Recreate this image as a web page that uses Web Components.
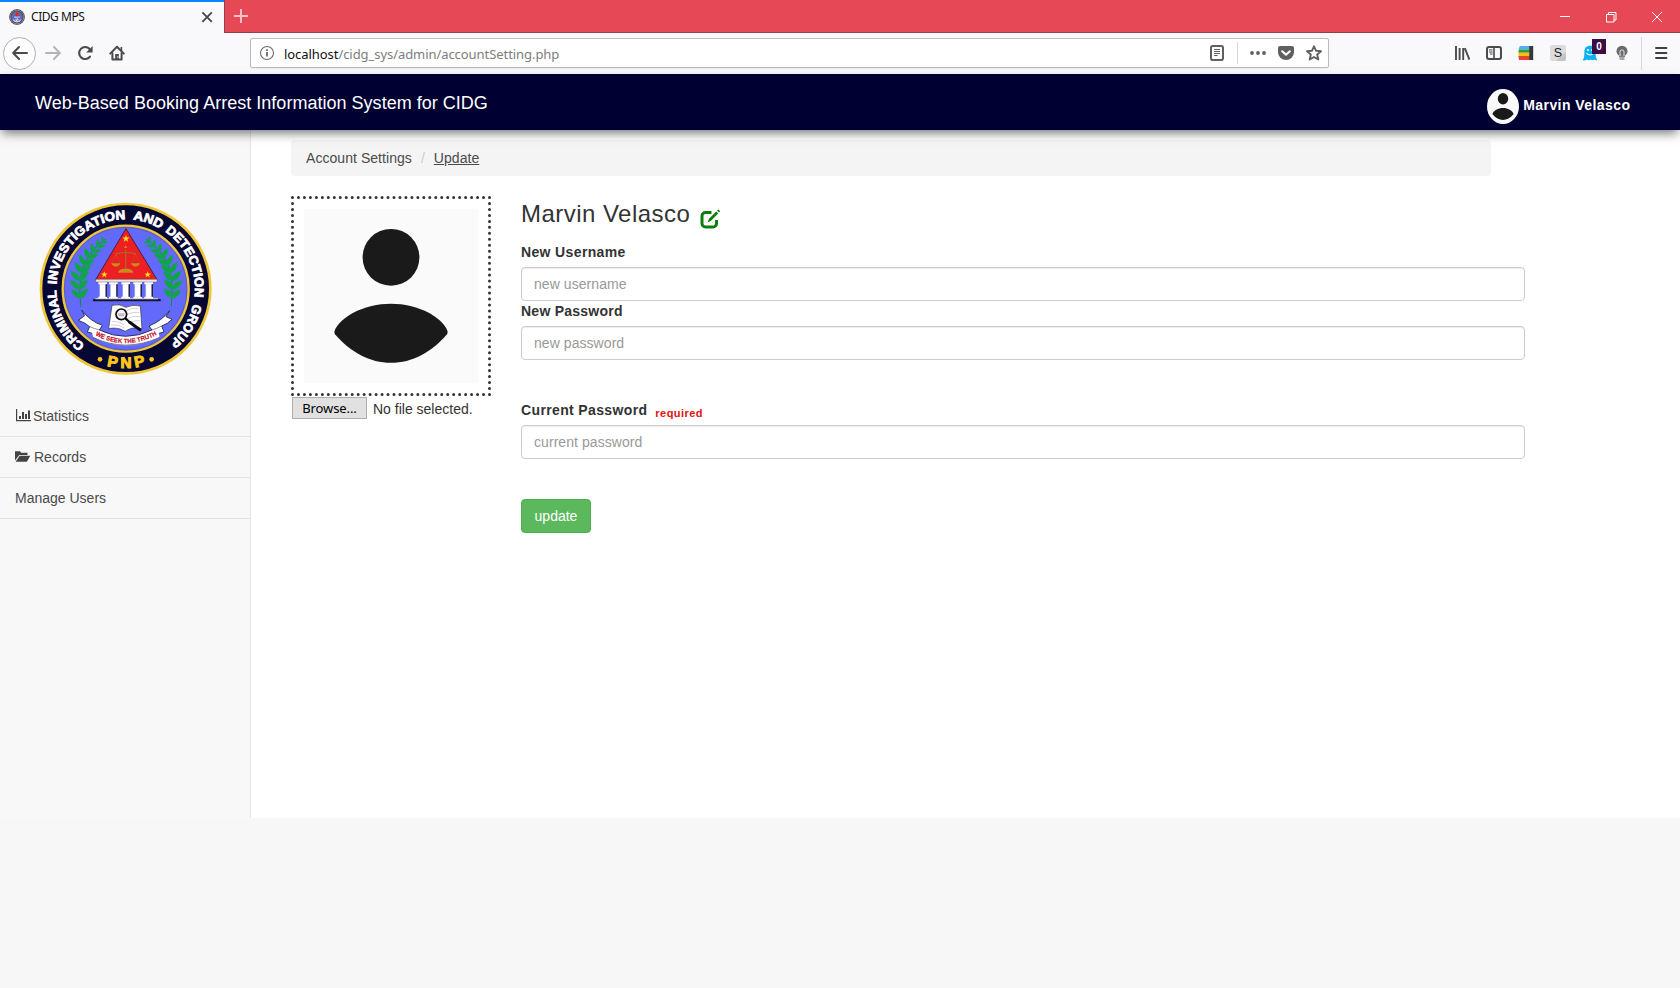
<!DOCTYPE html>
<html lang="en">
<head>
<meta charset="utf-8">
<title>CIDG MPS</title>
<style>
html,body{margin:0;height:100%;background:#f7f7f7;overflow:hidden}
body{font-family:"Liberation Sans",Arial,sans-serif;font-size:14px;line-height:20px;color:#333}
</style>
</head>
<body>
<app-window></app-window>
<script>
const define = (name, html) => customElements.define(name, class extends HTMLElement {
  constructor() {
    super();
    const t = document.createElement('template');
    t.innerHTML = typeof html === 'function' ? html(this) : html;
    this.attachShadow({mode: 'open'}).append(t.content.cloneNode(true));
  }
});

/* ---------- icons ---------- */
const G = 'fill="none" stroke="#4a4a4d" stroke-width="2" stroke-linecap="round" stroke-linejoin="round"';
const ICONS = {
  back: `<path ${G} d="M15 8H1.5M7 2L1.2 8L7 14"/>`,
  forward: `<path ${G} style="stroke:#b4b4b6" d="M1 8h13.5M9 2l5.8 6L9 14"/>`,
  reload: `<path fill="none" stroke="#4a4a4d" stroke-width="2.1" stroke-linecap="round" d="M13 11.6A6 6 0 1 1 12.6 4"/><path fill="#4a4a4d" d="M15.6 1v6.4H9.2z"/>`,
  home: `<path ${G} d="M1.2 8.6L8 1.8l6.8 6.8"/><path ${G} d="M3.4 8v6.6h9.2V8"/><path fill="#4a4a4d" d="M6.2 9h3.6v6H6.2zM11.6 2h1.6v4h-1.6z"/><circle cx="8.8" cy="12" r=".7" fill="#fff"/>`,
  info: `<circle cx="8" cy="8" r="6.5" fill="none" stroke="#6b6b6e" stroke-width="1.1"/><path stroke="#6b6b6e" stroke-width="1.8" d="M8 7v4.6M8 4.2V6"/>`,
  reader: `<rect x="2" y="1" width="12" height="14" rx="1.8" fill="none" stroke="#606063" stroke-width="2"/><path stroke="#606063" stroke-width="1" d="M5 4.5h6M5 6.5h6M5 8.5h6M5 10.5h3.6"/>`,
  dots: `<g fill="#606063"><circle cx="2" cy="8" r="1.9"/><circle cx="8" cy="8" r="1.9"/><circle cx="14" cy="8" r="1.9"/></g>`,
  pocket: `<path fill="#606063" d="M2 1h12a2 2 0 0 1 2 2v4.2a8 7.8 0 0 1-16 0V3a2 2 0 0 1 2-2z"/><path fill="none" stroke="#fff" stroke-width="2" stroke-linecap="round" stroke-linejoin="round" d="M4.2 6.2L8 9.8l3.8-3.6"/>`,
  star: `<path fill="none" stroke="#606063" stroke-width="1.9" stroke-linejoin="round" d="M8 1.3l2 4.4 5 .5-3.800 3.300 1.100 5L8 12l-4.300 2.500 1.100-5L1 6.200l5-.5z"/>`,
  library: `<path fill="none" stroke="#4a4a4d" stroke-width="1.9" d="M2 1v14M5.6 3v12M9.2 3v12M10.8 3.2L15.4 14.6"/>`,
  sidebar: `<rect x="1" y="2" width="14" height="12" rx="2" fill="none" stroke="#4a4a4d" stroke-width="2"/><path stroke="#4a4a4d" stroke-width="1.6" d="M8 2v12"/><path stroke="#4a4a4d" stroke-width="1" d="M3 4.9h3.6M3 7h3.6M4 9h2.6"/>`,
  stack: `<path fill="#34373c" d="M11 1h4.200v14H11z"/><path fill="#55acee" d="M1.800 1h9.500v3.600H.6z"/><path fill="#2e9b3c" d="M.8 4.600h10.500v3.200H.4z"/><path fill="#f5bf13" d="M.4 7.800h10.900V11H.8z"/><path fill="#e8432f" d="M.4 11h10.900v4H1z"/>`,
  sbox: `<rect width="16" height="16" rx="2" fill="#dcdcdc"/><path fill="#c4c4c4" d="M16 7v7a2 2 0 0 1-2 2H6z"/><text x="8" y="12.3" font-family="Liberation Sans" font-size="12.5" text-anchor="middle" fill="#222">S</text>`,
  ghost: `<path fill="#0fb0f2" d="M8 .8c3.6 0 5.6 2.4 5.6 5.6 0 4.600.3 6.200 1.700 8.600-1.300.6-2.300.2-3.100-.4-1.200 1-2.500 1-3.500 0-1.200 1-2.700 1-3.700 0-1.100.8-2.300 1-4.300.6 1.600-2.300 1.700-4.600 1.700-8.800C2.400 3.200 4.400.8 8 .8z"/><circle cx="6" cy="5" r="1" fill="#fff"/><circle cx="10" cy="5" r="1" fill="#fff"/><path fill="none" stroke="#fff" stroke-width="1.1" d="M4.500 8c2 2.600 5 2.600 7 0"/>`,
  bulb: `<circle cx="8" cy="6.200" r="5.500" fill="#6a6a6a"/><path fill="#777" d="M5 9h6v3H5z"/><path fill="none" stroke="#d5d5d5" stroke-width="1.100" d="M6 11V7a2 2 0 0 1 4 0v4"/><path fill="#a9a9a9" d="M5.500 11.800h5v3.200h-5z"/>`,
  menu: `<path stroke="#3f3f42" stroke-width="2" stroke-linecap="round" d="M3 3h10.400M3 8h10.400M3 13h10.400"/>`,
  close: `<path stroke="#4a4a4d" stroke-width="1.900" d="M3.400 3.400l9.400 9.400M12.800 3.400l-9.400 9.400"/>`,
  plus: `<path stroke="#ffc4c9" stroke-width="1.900" d="M8 1v14M1 8h14"/>`,
  min: `<path stroke="#fff" stroke-width="1" d="M3 8.500h10"/>`,
  restore: `<path fill="none" stroke="#fff" stroke-width="1" d="M3.500 6.500h7.500v7.500H3.500zM5.500 6.500v-2h7.500v7.500h-2"/>`,
  wclose: `<path stroke="#fff" stroke-width="1" d="M3 4l10 10M13 4L3 14"/>`,
  bars: `<path fill="#444" d="M1 1h1.200v12H1zM1 12h15.500v1.200H1zM4 8h2v3H4zM7 4h2v7H7zM10 6h2v5h-2zM13 2.500h2V11h-2z"/>`,
  folder: `<path fill="#444" d="M0 11.500V2.200h5l1.200 1.500h6.300v2.200H4.200z"/><path fill="#444" d="M4.700 6.800h10.600l-3.400 6H.6z"/>`,
  edit: `<path fill="none" stroke="#0a800a" stroke-width="3" d="M11.500 3.500H5.500A3.500 3.500 0 0 0 2 7v7.500A3.500 3.500 0 0 0 5.500 18h7.500a3.500 3.500 0 0 0 3.500-3.500V11"/><path fill="#0a800a" d="M16.200 2.500l2 2L11 11.800l-3.400 1.600 1.400-3.600zM17 1.600L18.300.4l1.900 1.900L19 3.500z"/>`
};
define('app-icon', el => {
  const n = el.getAttribute('name'), s = el.getAttribute('box') || '16';
  return `<style>:host{display:block;width:${s}px;height:${s}px;flex:none}svg{display:block;width:100%;height:100%}</style>
  <svg viewBox="0 0 ${s} ${s}">${ICONS[n]}</svg>`;
});

/* ---------- silhouette ---------- */
define('person-photo', `<style>:host{display:block;background:#fafafa;overflow:hidden}svg{display:block;width:100%;height:100%}</style>
<svg viewBox="0 0 174 174" preserveAspectRatio="none" fill="#1a1a1a"><circle cx="87" cy="48.300" r="28.400"/>
<path d="M30.500 122C36 108 60 94.800 87 94.800S138 108 143.500 122Q144 123.800 143 125.200C128 143 108 153.800 87 153.800S46 143 31 125.200Q30 123.800 30.500 122z"/></svg>`);

/* ---------- seal ---------- */
const star = (x, y, r) => {
  let p = '';
  for (let i = 0; i < 10; i++) { const a = Math.PI * i / 5, k = i % 2 ? r * .42 : r; p += `${i ? 'L' : 'M'}${(x + k * Math.sin(a)).toFixed(1)} ${(y - k * Math.cos(a)).toFixed(1)}`; }
  return `<path fill="#ffe11a" d="${p}z"/>`;
};
const laurel = () => {
  const pts = [[150,322,16,0],[147,296,17,2],[148,270,17,6],[154,246,16,14],[163,224,15,22],[175,203,14,30],[189,185,12,38],[204,169,10,44],[217,156,8,50]];
  let s = '<path d="M152 350Q142 250 172 205T228 148" fill="none" stroke="#0b8f3c" stroke-width="3"/>';
  for (const [x, y, l, a] of pts) for (const d of [-48, 42])
    s += `<path transform="translate(${x} ${y}) rotate(${a + d})" d="M0 4Q${-l} ${-l*.8} 0 ${-l*2.2}Q${l} ${-l*.8} 0 4z"/>`;
  return `<g fill="#0fa548" stroke="#2a9a70" stroke-width="1">${s}</g>`;
};
const columns = [217, 249, 286, 322, 355].map(x => `<path fill="#fff" stroke="#99a" stroke-width="1" d="M${x-8} 282h18v40h-18z"/><path fill="#fff" d="M${x-12} 277h26v6h-26zM${x-12} 320h26v6h-26z"/><path fill="#24243a" d="M${x+10} 283h4v37h-4z"/>`).join('');
/* each word of the rim: first and last angle, clockwise from the bottom of the circle */
const rim = [['CRIMINAL',36,89],['INVESTIGATION',93.500,180],['AND',186,210.500],['DETECTION',214.500,277],['GROUP',282.500,320.500]].map(([w,a,b]) =>
  `<text font-size="38" fill="#fff" stroke="#fff" stroke-width="2.200" textLength="${((b-a)*3.63).toFixed(1)}" lengthAdjust="spacingAndGlyphs"><textPath href="#top" startOffset="${((a-35.7)*3.63).toFixed(1)}">${w}</textPath></text>`).join('');
define('agency-seal', el => `<style>:host{display:block}svg{display:block;width:100%;height:100%}</style>
<svg viewBox="${el.getAttribute('view') || '0 0 570 585'}" font-family="Liberation Sans" font-weight="bold">
<defs><path id="top" d="M165.600 465A208 208 0 1 1 421 455"/><path id="bot" d="M173 505A238 238 0 0 0 401 505"/><path id="rib" d="M190 433Q286 486 384 433"/></defs>
<circle cx="287" cy="296" r="254" fill="#070733" stroke="#efc53a" stroke-width="8"/>
<circle cx="287" cy="296" r="189" fill="#6369fb" stroke="#efc53a" stroke-width="7"/>
<circle cx="287" cy="296" r="184" fill="none" stroke="#5a5560" stroke-width="1.500"/>
${el.hasAttribute('view') ? '<circle cx="287" cy="296" r="222" fill="none" stroke="#8a8a98" stroke-width="34"/>' : rim + `
<text font-size="46" fill="#ffc81a" stroke="#ffc81a" stroke-width="3" textLength="116"><textPath href="#bot" startOffset="62">PNP</textPath></text>`}
<circle cx="210" cy="508" r="7" fill="#ffc81a"/><circle cx="365" cy="508" r="7" fill="#ffc81a"/>
${laurel()}<g transform="translate(576 0) scale(-1 1)">${laurel()}</g>
<path d="M288 116L197 269H381z" fill="#ee1f22" stroke="#2b1a2e" stroke-width="2.500"/><path d="M197 268h184v8H197z" fill="#efe6da" stroke="#333" stroke-width="1"/>
${star(288,146,11)}${star(223,254,10)}${star(353,254,10)}
<g fill="none" stroke="#a8691c" stroke-width="4"><path d="M287 180v58M256 192Q287 182 318 192" /><path d="M258 193l-13 28M258 193l12 28M317 193l-12 28M317 193l12 28" stroke-width="1.300"/></g>
<path fill="#c98a1e" d="M244 220h27q-4 10-13.500 10T244 220zM303 220h27q-4 10-13.500 10T303 220zM264 248q2-10 16-12h14q14 2 16 12zM282 174h10l-5-8z"/>
${columns}
<path d="M190 327h202v7H188z" fill="#15152b"/><path d="M196 325h188v3H196z" fill="#ddd"/>
<path fill="#fff" stroke="#222238" stroke-width="2.500" d="M155 360L164 377L145 391Q165 398 179 410L172 426L188 430Q240 462 288 462T386 430L402 426L395 408Q413 402 426 388L408 380L419 362Q396 392 357 408L366 420Q286 458 208 420L217 406Q180 394 155 360z"/>
<path fill="none" stroke="#222238" stroke-width="1.500" d="M179 410Q194 416 208 420M395 408Q380 416 366 420"/>
<path fill="#fff" stroke="#fff" d="M186 426Q286 480 386 426L388 442Q286 490 190 442z"/>
<path fill="none" stroke="#222238" stroke-width="1.500" d="M188 442Q286 488 390 442"/>
${el.hasAttribute('view') ? '' : '<text font-size="19" fill="#c3131f" stroke="#c3131f" stroke-width=".5" textLength="194" lengthAdjust="spacingAndGlyphs"><textPath href="#rib" startOffset="6">WE SEEK THE TRUTH</textPath></text>'}
<path fill="#fff" stroke="#333" stroke-width="2" d="M246 346Q270 340 288 352Q308 342 331 348L336 416Q308 408 286 424Q262 410 236 416z"/>
<path fill="none" stroke="#c9c9d4" stroke-width="2.500" d="M290 362Q308 352 326 356M290 374Q308 364 328 368M292 386Q308 376 330 380M300 397Q316 390 331 392M246 394Q262 392 282 404M243 405Q264 402 284 414"/>
<circle cx="274" cy="373" r="16" fill="#f4f4fa" stroke="#0b0b12" stroke-width="5"/><path stroke="#555" stroke-width="1.500" d="M264 372h20M266 377h16"/>
<path stroke="#0b0b12" stroke-width="7" stroke-linecap="round" d="M287 386L298 396"/><path stroke="#0b0b12" stroke-width="9" stroke-linecap="round" d="M299 397L330 419"/>
</svg>`);

/* ---------- browser chrome ---------- */
define('title-bar', `<style>
:host{display:flex;height:33px;background:#e64856;font:12px/18px "Noto Sans","Open Sans",sans-serif;color:#111}
.tab{display:flex;align-items:center;width:224px;height:33px;box-sizing:border-box;background:#f9f9fb;border-top:2px solid #0a84ff;padding:0 0 1px 9px;flex:none}
.tab agency-seal{width:16px;height:16px}.t{margin:0 0 0 6px;flex:1;letter-spacing:-.45px}
.tab app-icon{margin-right:9px}
.rest{flex:1;height:32px;display:flex;align-items:flex-start;border-bottom:1px solid #93404c;border-left:1px solid #93404c}
.plus{margin:8px 0 0 8px}.sp{flex:1}.w{margin:8px 15px 0}
</style>
<div class="tab"><agency-seal view="25 34 524 524"></agency-seal><div class="t">CIDG MPS</div><app-icon name="close"></app-icon></div>
<div class="rest"><app-icon class="plus" name="plus"></app-icon><div class="sp"></div><app-icon class="w" name="min"></app-icon><app-icon class="w" name="restore"></app-icon><app-icon class="w" name="wclose"></app-icon></div>`);

define('nav-bar', `<style>
:host{display:flex;align-items:center;height:41px;background:#f9f9fb;box-sizing:border-box;padding-bottom:1px}
.back{width:33px;height:33px;border:1px solid #b1b1b3;border-radius:50%;background:#fdfdfe;display:grid;place-items:center;box-sizing:border-box;margin-left:3px}
.n{margin-left:16px}.n.f{margin-left:9px}
.url{width:1079px;height:30px;box-sizing:border-box;border:1px solid #bcbcbe;border-radius:2px;background:#fff;margin-left:125px;display:flex;align-items:center;box-shadow:0 1px 2px rgba(0,0,0,.06);font:13px/20px "Noto Sans","Open Sans",sans-serif;color:#7d7d7d}
.url .i{margin-left:8px}.txt{margin-left:9px;flex:1;padding-top:2px;white-space:nowrap;letter-spacing:-.06px}.txt b{font-weight:400;color:#111}
.d{width:1px;height:22px;background:#d9d9dc}
.badge{position:absolute;left:10px;top:-6px;width:14px;height:15px;background:#3a0f47;color:#fff;font:bold 10px/15px "Liberation Sans",sans-serif;text-align:center}
.g{position:relative}.ext{display:flex;gap:16px;margin-left:125px}
</style>
<div class="back"><app-icon name="back"></app-icon></div><app-icon class="n f" name="forward"></app-icon><app-icon class="n" name="reload"></app-icon><app-icon class="n" name="home"></app-icon>
<div class="url"><app-icon class="i" name="info"></app-icon><div class="txt"><b>localhost</b>/cidg_sys/admin/accountSetting.php</div>
<app-icon name="reader"></app-icon><div class="d" style="margin:0 12px"></div><app-icon name="dots"></app-icon><app-icon name="pocket" style="margin-left:12px"></app-icon><app-icon name="star" style="margin:0 6px 0 12px"></app-icon></div>
<div class="ext"><app-icon name="library"></app-icon><app-icon name="sidebar"></app-icon><app-icon name="stack"></app-icon><app-icon name="sbox"></app-icon><div class="g"><app-icon name="ghost"></app-icon><div class="badge">0</div></div><app-icon name="bulb"></app-icon></div>
<div class="d" style="margin:0 11px;height:33px"></div><app-icon name="menu"></app-icon>`);

/* ---------- page ---------- */
define('site-header', `<style>
:host{display:flex;justify-content:space-between;height:56px;background:#003;color:#fff;box-shadow:0 5px 10px -2px rgba(0,0,0,.55);position:relative;box-sizing:border-box;padding:0 50px 0 35px}
.t{font-size:18px;line-height:20px;padding-top:19px;letter-spacing:.02px}
.u{display:flex;font-weight:bold;padding-top:15px}.u person-photo{width:32px;height:35px;border-radius:50%;margin-right:4px}.u div{padding-top:6px;letter-spacing:.43px;margin-right:-.4px}
</style><div class="t"><slot name="title"></slot></div><div class="u"><person-photo></person-photo><div><slot name="user"></slot></div></div>`);

define('side-item', el => `<style>
:host{display:flex;align-items:center;height:41px;box-sizing:border-box;border-bottom:1px solid #e4e4e4;padding-left:15px;color:#4a4a4a}
app-icon{margin-right:var(--gap,2px)}
</style>${el.getAttribute('icon') ? `<app-icon name="${el.getAttribute('icon')}"></app-icon>` : ''}<slot></slot>`);

define('side-bar', `<style>
:host{display:block;width:250px;border-right:1px solid #e4e4e4;background:#f8f8f8;box-sizing:content-box}
agency-seal{width:190px;height:195px;margin:60px 0 11px 30px}
</style><agency-seal></agency-seal><slot></slot>`);

define('crumb-trail', `<style>
:host{display:flex;width:1200px;height:36px;box-sizing:border-box;background:#f4f4f4;border-radius:4px;padding:8px 15px;color:#4a4a4a;letter-spacing:.05px}
i{font-style:normal;color:#ccc;margin:0 9px}
</style><slot name="parent"></slot><i>/</i><u><slot name="current"></slot></u>`);

define('photo-picker', `<style>
:host{display:block;width:200px;margin-top:20px}
.f{display:grid;width:200px;height:200px;place-items:center}
.f>*{grid-area:1/1}
person-photo{width:174px;height:174px}
.r{display:flex;align-items:center;margin:1px 0 0 1px}
button{box-sizing:border-box;width:75px;height:22px;padding:0;border:1px solid #adadad;background:#e1e1e1;color:#000;font:13px/20px "Noto Sans","Open Sans",sans-serif;letter-spacing:-.1px}
.n{margin-left:6px;white-space:nowrap;padding-top:1px}
</style><div class="f"><svg width="200" height="200"><path d="M1.500 1.500h197v197h-197z" fill="none" stroke="#333" stroke-width="3" stroke-linecap="round" stroke-dasharray="0 5.9697"/></svg><person-photo></person-photo></div><div class="r"><button>Browse...</button><span class="n">No file selected.</span></div>`);

define('form-field', el => `<style>
:host{display:block;height:59px}
label{display:flex;height:20px;margin-bottom:5px;font-weight:bold;letter-spacing:var(--track,.36px)}
input{display:block;box-sizing:border-box;width:100%;height:34px;border:1px solid #ccc;border-radius:4px;padding:6px 12px;background:#fff;font:14px/20px "Liberation Sans",sans-serif;letter-spacing:.06px;box-shadow:inset 0 1px 1px rgba(0,0,0,.075);color:#555}
input::placeholder{color:#999;opacity:1}
em{font:bold 11px/20px "Liberation Sans",sans-serif;color:#e01010;margin-left:8px;padding-top:3px;letter-spacing:.45px}
</style><label>${el.getAttribute('label')}${el.hasAttribute('required') ? '<em>required</em>' : ''}</label><input placeholder="${el.getAttribute('hint')}">`);

define('account-form', `<style>
:host{display:block;width:1004px;margin-left:30px;padding-top:25px}
h3{display:flex;margin:0;font-weight:400;font-size:24px;line-height:26px;height:41px;letter-spacing:.47px}
h3 app-icon{margin:8px 0 0 10px}
.gap{margin-top:40px}
button{display:block;margin-top:40px;width:70px;height:34px;box-sizing:border-box;border:1px solid #4cae4c;border-radius:4px;background:#5cb85c;color:#fff;padding:0;font:14px/20px "Liberation Sans",sans-serif}
</style><h3>Marvin Velasco<app-icon name="edit" box="21"></app-icon></h3>
<form-field label="New Username" hint="new username"></form-field>
<form-field label="New Password" hint="new password" style="--track:.25px"></form-field>
<form-field class="gap" label="Current Password" hint="current password" required></form-field>
<button>update</button>`);

define('app-window', `<style>
:host{display:block;width:1680px;height:988px;overflow:hidden}
.m{display:flex;height:688px}
.c{flex:1;background:#fff;padding:10px 0 0 40px}
.row{display:flex}
</style><title-bar></title-bar><nav-bar></nav-bar>
<site-header><span slot="title">Web-Based Booking Arrest Information System for CIDG</span><span slot="user">Marvin Velasco</span></site-header>
<div class="m"><side-bar><side-item icon="bars">Statistics</side-item><side-item icon="folder" style="--gap:3px">Records</side-item><side-item>Manage Users</side-item></side-bar>
<div class="c"><crumb-trail><span slot="parent">Account Settings</span><span slot="current">Update</span></crumb-trail>
<div class="row"><photo-picker></photo-picker><account-form></account-form></div></div></div>`);
</script>
</body>
</html>
